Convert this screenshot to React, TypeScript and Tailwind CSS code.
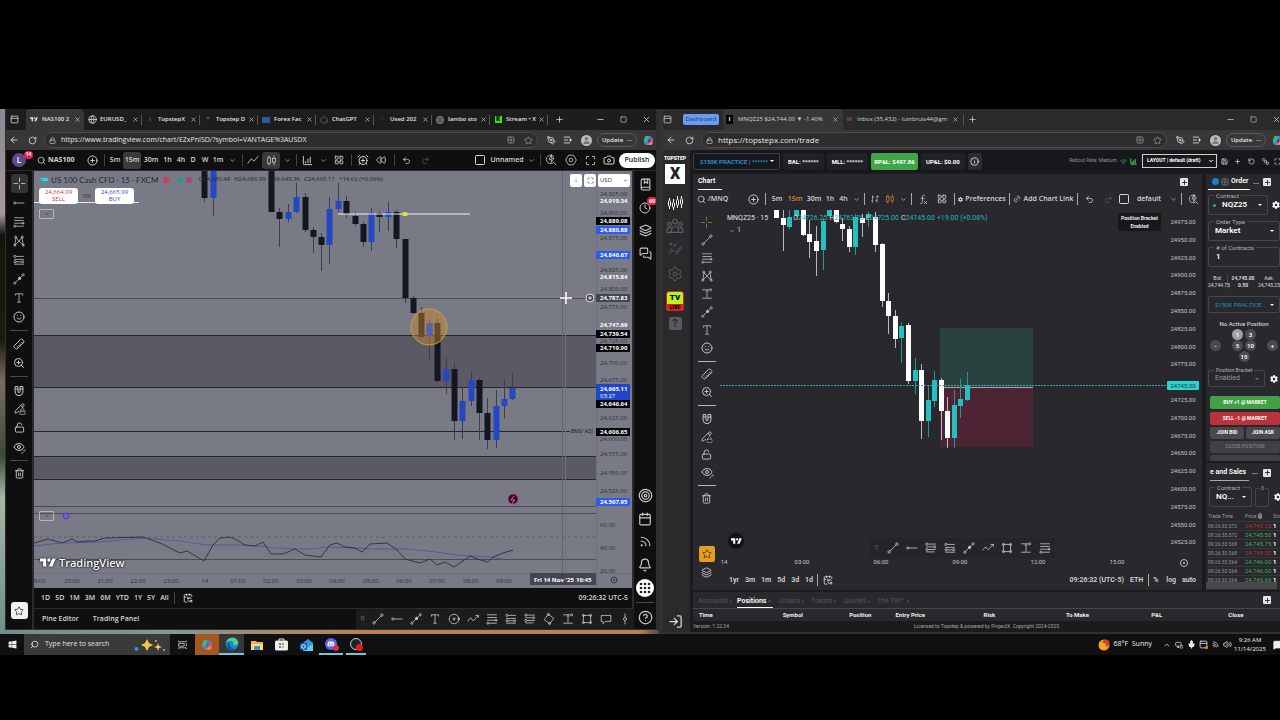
import type { ReactNode } from 'react'
import clsx from 'clsx'
import {
  AlarmClockPlus, ArrowLeft, Bell, BookMarked, Calendar, CalendarSync, Camera, ChartColumnIncreasing, ChevronDown,
  ChevronUp, CircleHelp, CirclePlus, Clock, Eye, Globe, Grid2x2, Hexagon, Info, Layers, LayoutGrid, Link2, ListPlus,
  Lock, LockOpen, LogIn, Magnet, Maximize, MessageSquare, MessagesSquare, Mic, Minus, MonitorSmartphone, PanelTop,
  Pencil, PenTool, Plus, Redo2, Rewind, RotateCcw, RotateCw, Rss, Ruler, Save, Search, Settings, Smile, Square,
  SquareStack, Star, Target, Trash2, Undo2, User, Volume2, Wifi, X, ZoomIn,
} from 'lucide-react'
import { FaCog, FaDiscord, FaWindows } from 'react-icons/fa'

type Candle = [x: number, high: number, open: number, close: number, low: number, up: 0 | 1]

const leftCandles: Candle[] = [
  [204, 171, 171, 198, 202, 0], [213, 171, 171, 198, 216, 1], [271, 171, 171, 212, 212, 0],
  [279, 208, 212, 219, 247, 0], [288, 204, 212, 219, 222, 1], [296, 183, 197, 212, 213, 1],
  [305, 193, 197, 230, 232, 0], [313, 227, 230, 237, 253, 0], [321, 233, 237, 245, 271, 0],
  [329, 197, 209, 245, 264, 1], [338, 183, 201, 209, 212, 1], [346, 196, 201, 214, 218, 0],
  [355, 212, 216, 224, 226, 0], [363, 222, 224, 242, 247, 0], [371, 208, 213, 242, 251, 1],
  [379, 211, 213, 217, 232, 0], [388, 202, 212, 217, 231, 1], [396, 210, 212, 239, 248, 0],
  [405, 239, 239, 298, 303, 0], [413, 296, 298, 313, 314, 0], [421, 307, 313, 337, 338, 0],
  [429, 320, 323, 336, 361, 1], [437, 319, 323, 381, 383, 0], [446, 357, 369, 381, 394, 1],
  [454, 363, 369, 421, 440, 0], [462, 387, 401, 421, 439, 1], [471, 371, 380, 401, 406, 1],
  [479, 378, 380, 413, 440, 0], [487, 398, 413, 440, 449, 0], [496, 390, 406, 440, 448, 1],
  [504, 380, 399, 406, 419, 1], [512, 373, 388, 399, 400, 1],
]

const rightCandles: Candle[] = [
  [776, 210, 210, 218, 218, 0], [783, 210, 218, 225, 251, 0], [789, 210, 217, 227, 229, 1],
  [796, 210, 210, 216, 218, 1], [803, 210, 210, 235, 236, 0], [809, 220, 234, 242, 258, 0],
  [816, 226, 241, 251, 276, 0], [823, 218, 221, 250, 270, 1], [829, 210, 210, 216, 217, 1],
  [836, 210, 210, 222, 223, 0], [842, 218, 224, 229, 241, 0], [849, 226, 229, 247, 252, 0],
  [855, 214, 217, 247, 255, 1], [862, 214, 218, 223, 237, 0], [868, 212, 214, 218, 227, 1],
  [875, 212, 217, 245, 252, 0], [882, 243, 244, 301, 307, 0], [888, 293, 301, 316, 334, 0],
  [895, 310, 316, 339, 348, 0], [901, 322, 326, 338, 363, 1], [908, 323, 325, 381, 384, 0],
  [915, 358, 370, 381, 394, 1], [921, 364, 370, 421, 439, 0], [928, 386, 400, 421, 437, 1],
  [934, 371, 380, 401, 407, 1], [941, 378, 380, 411, 440, 0], [947, 397, 411, 438, 448, 0],
  [954, 390, 405, 438, 448, 1], [960, 379, 399, 406, 418, 1], [967, 372, 385, 400, 401, 1],
]

const leftPrices: [string, number, string?][] = [
  ['24,925.00', 194], ['24,919.34', 201, 'white'], ['24,900.00', 213], ['24,875.00', 238],
  ['24,889.08', 221, '#050508'], ['24,880.88', 230, '#2f5be8'], ['24,846.67', 255, '#2f5be8'],
  ['24,825.00', 270], ['24,815.84', 277, 'white'], ['24,800.00', 289], ['24,775.00', 307],
  ['24,787.83', 298, '#434651'], ['24,747.69', 325, 'white'], ['24,725.00', 341],
  ['24,739.54', 334, '#050508'], ['24,719.90', 348, '#050508'], ['24,700.00', 363],
  ['24,675.00', 380], ['24,646.64', 404, '#050508'], ['24,625.00', 418], ['24,600.00', 439],
  ['24,606.65', 432, '#050508'], ['24,575.00', 454], ['24,550.00', 473], ['24,525.00', 491],
  ['24,507.95', 502, '#2f5be8'], ['60.00', 525], ['40.00', 548], ['20.00', 571],
]

const leftTimes: [string, number][] = [
  ['19:00', 38], ['20:00', 72], ['21:00', 105], ['22:00', 138], ['23:00', 171], ['14', 205], ['01:00', 238],
  ['02:00', 271], ['03:00', 304], ['04:00', 337], ['05:00', 371], ['06:00', 404], ['07:00', 437],
  ['08:00', 471], ['09:00', 504],
]

const rightPrices: [string, number][] = [
  ['24975.00', 222], ['24950.00', 240], ['24925.00', 258], ['24900.00', 275], ['24875.00', 293],
  ['24850.00', 311], ['24825.00', 329], ['24800.00', 347], ['24775.00', 364], ['24725.00', 400],
  ['24700.00', 418], ['24675.00', 436], ['24650.00', 453], ['24625.00', 471], ['24600.00', 489],
  ['24575.00', 507], ['24550.00', 525], ['24525.00', 542],
]

const rightTimes: [string, number][] = [
  ['14', 724], ['03:00', 802], ['06:00', 881], ['09:00', 960], ['12:00', 1038], ['15:00', 1117],
]

const trades: [string, string, boolean][] = [
  ['09:26:33.572', '24,745.25', false], ['09:26:33.572', '24,745.50', true],
  ['09:26:33.568', '24,745.75', true], ['09:26:33.568', '24,745.50', false],
  ['09:26:33.564', '24,746.00', true], ['09:26:33.564', '24,746.00', true],
  ['09:26:33.564', '24,745.60', true],
]

// Drawing-tool glyphs on a 20x20 grid
const glyphs: Record<string, ReactNode> = {
  cross: <path d="M10 1v7M10 12v7M1 10h7M12 10h7" />,
  trend: <><circle cx="3.5" cy="16.5" r="2" /><circle cx="16.5" cy="3.5" r="2" /><path d="M5 15L15 5" /></>,
  ray: <><circle cx="3" cy="10" r="1.8" /><path d="M5 10h14" /></>,
  arrow: <><circle cx="3" cy="17" r="1.8" /><circle cx="17" cy="3" r="1.8" /><path d="M4.5 15.5l11-11" /><circle cx="11" cy="9" r="2" fill="currentColor" /></>,
  fib: <><path d="M2 3h16M2 7.5h16M2 12h16M5 17h13" /><circle cx="3" cy="17" r="1.7" /><circle cx="17" cy="12" r="1.4" /></>,
  pattern: <><path d="M3 17L5 4l5 6 5-6 2 13-7-7z" /><circle cx="3" cy="17" r="1.7" /><circle cx="17" cy="17" r="1.7" /><circle cx="15.5" cy="3.5" r="1.7" /><circle cx="4.5" cy="3.5" r="1.7" /></>,
  position: <><circle cx="3" cy="4" r="1.8" /><path d="M5 4h13M2 9h16M2 17h16M5 13h9" /><circle cx="3.5" cy="13" r="1.8" /><circle cx="16" cy="13" r="1.8" /></>,
  channel: <><circle cx="3" cy="3.5" r="1.8" /><path d="M5 3.5h13M2 8h12M2 16.5h14" /><circle cx="16" cy="8" r="1.8" /><circle cx="3" cy="12.5" r="1.8" /><path d="M5 12.5h13" /></>,
  text: <path d="M4 6V3h12v3M10 3v14M7 17h6" />,
  measure: <><path d="M2 3h12M2 17h16M10 4v12M8 6l2-2 2 2" /><circle cx="16" cy="3" r="1.7" /></>,
  circle: <><circle cx="10" cy="10" r="8" /><circle cx="10" cy="10" r="1.8" /><circle cx="18" cy="10" r="1.6" /></>,
  wave: <path d="M1 14l5-6 4 5 4-4 5-5M14 4h5v4" />,
  rotate: <><path d="M9 2l9 7-7 9-9-7z" /><circle cx="9" cy="2.5" r="1.7" /><circle cx="11" cy="17.5" r="1.7" /></>,
  rect: <><path d="M4 4h12v12H4z" /><circle cx="4" cy="4" r="1.7" /><circle cx="16" cy="4" r="1.7" /><circle cx="4" cy="16" r="1.7" /><circle cx="16" cy="16" r="1.7" /></>,
  note: <path d="M2 4h16v10h-9l-4 4v-4H2z" />,
  vline: <><path d="M10 1v6M10 13v6" /><circle cx="10" cy="10" r="2.5" /></>,
  lineChart: <path d="M1 16l6-8 5 4 7-9" />,
  bars: <path d="M5 3v14M2 14h3M5 6h3M14 3v14M11 13h3M14 5h4" />,
  candles: <><path d="M5.5 1v4M5.5 15v4M14.5 1v5M14.5 13v6" /><rect x="3" y="5" width="5" height="10" /><rect x="12" y="6" width="5" height="7" /></>,
  fx: <path d="M12 2c-4-1-4 3-4 7v5c0 3-2 4-4 3M5 8h7M11 13l5 5M16 13l-5 5" />,
  quickSearch: <><path d="M15 5a7 7 0 1 0 0 8M14.500 14l4 4.500" /><path d="M11 1L7 9h4l-1 5 5-7h-4z" /></>,
  settings: <><path d="M6 2h8l5 8-5 8H6l-5-8z" /><circle cx="10" cy="10" r="3" /></>,
  community: <><circle cx="10" cy="5" r="2.5" /><circle cx="4" cy="8" r="2" /><circle cx="16" cy="8" r="2" /><path d="M6 17c0-9 8-9 8 0zM1 17c0-4 1-6 5-5M19 17c0-4-1-6-5-5M1 17h18" /></>,
  signals: <><path d="M1 18l6-6 3 3 9-9M1 14l5-5M10 18l8-8" /><path d="M4 2v4M2 4h4M9 4v3M7.500 5.500h3M12 2v2" /></>,
  taskView: <path d="M3 3v2h14V3M3 8h10v5H3zM17 8v5M3 18v-2h14v2" />,
}

function Glyph({ name, size = 12, className }: { name: string; size?: number; className?: string }) {
  return (
    <svg width={size} height={size} viewBox="0 0 20 20" fill="none" stroke="currentColor" strokeWidth="1.3" className={clsx('shrink-0', className)}>
      {glyphs[name]}
    </svg>
  )
}

function IconButton({ label, className, children }: { label: string; className?: string; children: ReactNode }) {
  return (
    <button type="button" aria-label={label} className={clsx('flex shrink-0 items-center justify-center', className)}>
      {children}
    </button>
  )
}

function Divider({ className }: { className?: string }) {
  return (
    <span className={clsx('flex shrink-0 justify-center', className)}>
      <span className="h-3 w-px bg-current" />
    </span>
  )
}

interface CandlesProps {
  data: Candle[]
  width: number
  upColor: string
  downColor: string
  upWick: string
  downWick: string
}

function Candles({ data, width, upColor, downColor, upWick, downWick }: CandlesProps) {
  return (
    <g>
      {data.map(([x, high, open, close, low, up]) => (
        <g key={x}>
          <line x1={x + 0.5} x2={x + 0.5} y1={high} y2={low} stroke={up ? upWick : downWick} />
          <rect x={x - width / 2 + 0.5} y={open} width={width} height={close - open} fill={up ? upColor : downColor} />
        </g>
      ))}
    </g>
  )
}

function TvMark({ className }: { className?: string }) {
  return (
    <svg viewBox="0 0 36 20" className={className} fill="currentColor">
      <path d="M14 19H7V8H0V1h14zM28 19h-8L27.5 1h8z" />
      <circle cx="20" cy="4.5" r="3.8" />
    </svg>
  )
}

function CopilotMark({ className }: { className?: string }) {
  return (
    <svg viewBox="0 0 20 20" className={className}>
      <path d="M7 2h6c2 0 2 2 3 5l-5 1-4 10H6c-3 0-5-3-4-6l2-7c0-2 1-3 3-3z" fill="#2f8de0" />
      <path d="M6 2h4L7 12 2 13c-1-2 0-4 1-7 0-2 1-4 3-4z" fill="#45b86b" />
      <path d="M14 18H8c-1 0-2-1-2-3l6-2 3-8c3 0 4 3 3 6l-1 4c0 2-1 3-3 3z" fill="#c750b4" />
      <path d="M13 18H9l3-5 6 0c-1 3-2 5-5 5z" fill="#f08a3c" />
    </svg>
  )
}

function AddressBar({ url, textSize }: { url: string; textSize: string }) {
  return (
    <div className="flex h-5 items-center bg-[#373737] text-[#e6e6e6]">
      <IconButton label="Back" className="w-4"><ArrowLeft size={10} /></IconButton>
      <IconButton label="Reload" className="w-5"><RotateCw size={9} /></IconButton>
      <label className="ml-[2px] flex h-4 min-w-0 flex-1 items-center gap-[5px] rounded-full border border-[#4b4b4b] bg-[#2d2d2d] px-1">
        <Lock size={7} className="shrink-0" />
        <input aria-label="Address" defaultValue={url} className={clsx('min-w-0 flex-1 bg-transparent outline-none', textSize)} />
        <Grid2x2 size={8} className="shrink-0 text-[#9a9a9a]" />
        <Star size={9} className="ml-1 shrink-0 text-[#9a9a9a]" />
      </label>
      <IconButton label="Extensions" className="ml-[5px] w-4"><PenTool size={9} /></IconButton>
      <IconButton label="Favorites" className="w-[18px]"><ListPlus size={10} /></IconButton>
      <span className="ml-1 flex size-[11px] shrink-0 items-center justify-center rounded-full bg-[#bdbdbd] text-[#777]">
        <User size={9} fill="currentColor" />
      </span>
      <button type="button" className="ml-[5px] flex h-[14px] w-10 shrink-0 items-center justify-center gap-1 rounded-full border border-[#5a5a5a] text-[6px] font-semibold">
        Update <span>···</span>
      </button>
      <IconButton label="Copilot" className="ml-[3px] w-4"><CopilotMark className="size-[11px]" /></IconButton>
    </div>
  )
}

function WindowButtons({ className }: { className?: string }) {
  return (
    <div className={clsx('ml-auto flex shrink-0 items-center', className)}>
      <IconButton label="Minimize" className="w-[23px]"><Minus size={9} /></IconButton>
      <IconButton label="Maximize" className="w-[23px]"><Square size={7} /></IconButton>
      <IconButton label="Close window" className="w-[23px]"><X size={9} /></IconButton>
    </div>
  )
}

const browserTabs: { title: string; icon: ReactNode }[] = [
  { title: 'NAS100 2', icon: <TvMark className="w-2" /> },
  { title: 'EURUSD_', icon: <Globe size={9} /> },
  { title: 'TopstepX', icon: <span className="text-[#888]">I</span> },
  { title: 'Topstep D', icon: <span className="text-[#888]">T</span> },
  { title: 'Forex Fac', icon: <span className="h-[6px] w-2 bg-[#275a9e]" /> },
  { title: 'ChatGPT', icon: <Hexagon size={8} className="text-[#777]" /> },
  { title: 'Used 202', icon: <span className="text-[#5a2a2a]">ıı</span> },
  { title: 'lambo sto', icon: <span className="size-2 rounded-full border border-[#888] bg-[#555]" /> },
  { title: 'Stream • X', icon: <span className="flex size-[7px] items-center justify-center bg-[#3fe01c] text-[6px] font-black text-black">K</span> },
]

const leftTools: ReactNode[] = [
  <Glyph name="cross" size={13} />, <Glyph name="ray" />, <Glyph name="fib" />, <Glyph name="pattern" />,
  <Glyph name="position" />, <Glyph name="arrow" />, <Glyph name="text" />, <Smile size={12} />, null,
  <Ruler size={12} className="rotate-90" />, <ZoomIn size={12} />, null, <Magnet size={12} className="rotate-135" />,
  <PencilLock />, <LockOpen size={11} />, <EyeBrush />, null, <Trash2 size={11} />,
]

const rightTools: ReactNode[] = [
  <Glyph name="cross" size={13} className="text-[#a5733f]" />, <Glyph name="trend" />, <Glyph name="fib" />,
  <Glyph name="pattern" />, <Glyph name="measure" />, <Glyph name="arrow" />, <Glyph name="text" />,
  <Smile size={12} />, null, <Ruler size={12} className="rotate-90" />, <ZoomIn size={12} />, null,
  <Magnet size={12} className="rotate-135" />, <PencilLock />, <LockOpen size={11} />, <EyeBrush />, null,
  <Trash2 size={11} />,
]

function PencilLock() {
  return (
    <span className="relative">
      <Pencil size={11} />
      <Lock size={7} className="absolute -right-px -bottom-px bg-[#1a1a1c]" />
    </span>
  )
}

function EyeBrush() {
  return (
    <span className="relative">
      <Eye size={12} />
      <Pencil size={5} className="absolute -right-px -bottom-px" />
    </span>
  )
}

function ToolColumn({ tools, cell, line }: { tools: ReactNode[]; cell: string; line: string }) {
  return (
    <>
      {tools.map((tool, i) =>
        tool === null ? (
          <span key={i} className="flex h-2 items-center"><span className={line} /></span>
        ) : (
          <IconButton key={i} label={`Tool ${i + 1}`} className={clsx(cell, i === 0 && 'rounded-[3px]')}>{tool}</IconButton>
        ),
      )}
    </>
  )
}

function TradingViewToolbar() {
  const frame = 'text-[7px] font-semibold'
  return (
    <div className="flex h-5 items-center bg-[#0f0f0f] text-[#d6d6d6]">
      <div className="relative ml-[6px] flex size-[14px] shrink-0 items-center justify-center rounded-full bg-[#5d4a86] text-[8px] font-semibold text-white">
        L
        <span className="absolute -top-[2px] -right-[7px] flex h-2 w-[9px] items-center justify-center rounded-full bg-[#e0234e] text-[5px] font-bold">14</span>
      </div>
      <button type="button" className="ml-[11px] flex w-[47px] shrink-0 items-center gap-[2px] text-[7px] font-bold">
        <Search size={9} /> NAS100
      </button>
      <IconButton label="Compare" className="w-4"><CirclePlus size={11} /></IconButton>
      <Divider className="w-2 text-[#444]" />
      <button type="button" className={clsx(frame, 'w-[14px]')}>5m</button>
      <button type="button" className={clsx(frame, 'mx-px h-[17px] w-[18px] rounded-[3px] bg-[#3a3a3a]')}>15m</button>
      <button type="button" className={clsx(frame, 'w-[18px]')}>30m</button>
      <button type="button" className={clsx(frame, 'w-[15px]')}>1h</button>
      <button type="button" className={clsx(frame, 'w-3')}>4h</button>
      <button type="button" className={clsx(frame, 'w-3')}>D</button>
      <button type="button" className={clsx(frame, 'w-3')}>W</button>
      <button type="button" className={clsx(frame, 'w-[14px]')}>1m</button>
      <IconButton label="More intervals" className="w-[14px]"><ChevronDown size={7} /></IconButton>
      <Divider className="w-[6px] text-[#444]" />
      <IconButton label="Line" className="w-[15px]"><Glyph name="lineChart" /></IconButton>
      <IconButton label="Candles" className="mx-[2px] h-[17px] w-[18px] rounded-[3px] bg-[#3a3a3a]"><Glyph name="candles" size={11} /></IconButton>
      <IconButton label="Chart types" className="w-[10px]"><ChevronDown size={7} /></IconButton>
      <Divider className="w-2 text-[#444]" />
      <IconButton label="Indicators" className="w-[14px]"><ChartColumnIncreasing size={11} /></IconButton>
      <IconButton label="Indicator list" className="w-[18px]"><ChevronDown size={7} /></IconButton>
      <IconButton label="Templates" className="w-[14px]"><LayoutGrid size={10} /></IconButton>
      <Divider className="w-[10px] text-[#444]" />
      <IconButton label="Alert" className="w-[14px]"><AlarmClockPlus size={12} /></IconButton>
      <IconButton label="Replay" className="w-[22px]"><Rewind size={10} /></IconButton>
      <Divider className="w-1 text-[#444]" />
      <IconButton label="Undo" className="w-5"><Undo2 size={9} /></IconButton>
      <IconButton label="Redo" className="w-[18px] text-[#555]"><Redo2 size={9} /></IconButton>
      <div className="ml-auto flex items-center">
        <IconButton label="Layout" className="w-5"><Square size={12} /></IconButton>
        <button type="button" className="w-[34px] text-[7px] font-semibold">Unnamed</button>
        <IconButton label="Layouts" className="w-[14px]"><ChevronDown size={7} /></IconButton>
        <Divider className="w-1 text-[#444]" />
        <IconButton label="Quick search" className="w-[18px]"><Glyph name="quickSearch" /></IconButton>
        <IconButton label="Settings" className="w-[21px]"><Glyph name="settings" /></IconButton>
        <IconButton label="Fullscreen" className="w-[18px]"><Maximize size={11} /></IconButton>
        <IconButton label="Snapshot" className="w-5"><Camera size={12} /></IconButton>
        <button type="button" className="mr-px h-[15px] w-9 rounded-full bg-white text-[7px] font-semibold text-[#222]">Publish</button>
      </div>
    </div>
  )
}

function LeftChart() {
  return (
    <div className="relative min-h-0 flex-1 bg-[#787b86]">
      <svg className="absolute inset-0 h-full w-full text-[7px]" aria-label="NAS100 chart">
        <g transform="translate(-34 -171)">
          <rect x="34" y="335" width="562" height="52" fill="#5a5965" />
          <rect x="34" y="456" width="562" height="23" fill="#5a5965" />
          {[335, 387, 456, 479].map((y) => (
            <line key={y} x1="34" x2="596" y1={y + 0.5} y2={y + 0.5} stroke="#23252f" />
          ))}
          <line x1="34" x2="570" y1="431.5" y2="431.5" stroke="#23252f" />
          {[298, 506, 513, 559].map((y) => (
            <line key={y} x1="34" x2="596" y1={y + 0.5} y2={y + 0.5} stroke="#4a4d58" />
          ))}
          <line x1="34" x2="632" y1="573.5" y2="573.5" stroke="#6c6f7a" />
          <line x1="34" x2="596" y1="537" y2="537" stroke="#5c5f69" strokeDasharray="3 3" />
          <line x1="562.5" x2="562.5" y1="171" y2="574" stroke="#60636e" />
          <line x1="565.5" x2="565.5" y1="171" y2="574" stroke="#6f727d" />
          <line x1="596.5" x2="596.5" y1="171" y2="588" stroke="#6c6f7a" />
          <line x1="34" x2="139" y1="202.5" y2="202.5" stroke="#e8e8ea" />
          <Candles data={leftCandles} width={6} upColor="#2447c4" downColor="#141722" upWick="#3a3f50" downWick="#3a3f50" />
          <circle cx="429" cy="327" r="18" fill="#d08a2c" fillOpacity="0.45" stroke="#d89a3c" />
          <rect x="426.5" y="323" width="6" height="13" fill="#5a5fb0" />
          <line x1="338" x2="470" y1="214" y2="214" stroke="#f2f2f2" />
          <ellipse cx="405" cy="214" rx="3" ry="2" fill="#e5e234" />
          <path d="M560 298h12M566 292v12" stroke="#fff" strokeWidth="1.5" />
          <polyline fill="none" stroke="#4552a8" strokeWidth="0.8" points="34,546 60,543 100,542 143,538 180,541 207,545 245,545 277,548 307,549 330,547 377,549 407,549 437,552 457,555 490,557 503,559" />
          <polyline fill="none" stroke="#2b2e38" strokeWidth="0.9" points="34,543 48,539 62,543 72,539 78,542 88,541 95,541 105,538 143,537 160,543 180,553 187,551 204,561 213,545 220,538 230,537 235,539 245,545 255,546 263,542 271,554 283,554 295,549 305,555 321,557 330,545 337,543 345,547 355,548 362,552 370,544 387,543 397,550 405,559 420,563 430,559 437,565 445,562 454,567 470,556 477,559 488,562 493,557 503,553 513,550" />
          <circle cx="513" cy="499" r="5" fill="#2b0f28" stroke="#b8357c" />
          <path d="M514 496l-3 4h4l-3 3" stroke="#e06aa8" fill="none" />
          <circle cx="66" cy="516" r="3" fill="#7c5cc8" stroke="#5a35d0" />
          <text x="571" y="433" fontSize="5" fill="#15171f">BMS/ ADJ</text>
          {leftPrices.map(([price, y, tone]) => (
            <g key={price}>
              {tone && tone !== 'white' && <rect x="596" y={y - 4} width="34" height="8" fill={tone} />}
              <text x="600" y={y + 2} fill={tone ? '#fff' : '#2c2f3a'} fontWeight={tone ? 700 : 400} fontSize="6">{price}</text>
            </g>
          ))}
          <rect x="596" y="384" width="34" height="16" fill="#1f45c8" />
          <text x="600" y="391" fill="#fff" fontSize="6" fontWeight="700">24,665.11</text>
          <text x="600" y="398" fill="#fff" fontSize="6">03:27</text>
          <circle cx="590" cy="298" r="4" fill="#434651" stroke="#fff" strokeWidth="0.8" />
          <path d="M588 298h4M590 296v4" stroke="#fff" strokeWidth="0.8" />
          {leftTimes.map(([time, x]) => (
            <text key={x} x={x} y="583" textAnchor="middle" fontSize="6" fill="#2c2f3a">{time}</text>
          ))}
          <rect x="530" y="573" width="66" height="12" fill="#434651" />
          <text x="534" y="582" fill="#fff" fontSize="6" fontWeight="700">Fri 14 Nov '25</text>
          <text x="576" y="582" fill="#fff" fontSize="6" fontWeight="700">10:45</text>
          <circle cx="614" cy="580" r="3" fill="none" stroke="#33363f" />
          <circle cx="614" cy="580" r="1" fill="#33363f" />
        </g>
      </svg>
      <div className="relative flex h-[17px] items-center pl-[6px] text-[#23252e]">
        <span className="flex h-[6px] w-2 items-center justify-center rounded-full bg-[#1ba5b4] text-[4px] text-white">100</span>
        <span className="ml-[3px] text-[8px] [font-family:Lato,sans-serif]">US 100 Cash CFD · 15 · FXCM</span>
        <span className="ml-[5px] size-[6px] rounded-full bg-[#d83a52]" />
        <span className="ml-2 size-[6px] rounded-full bg-[#2b9a84]" />
        <span className="ml-[3px] size-[6px] rounded-full bg-[#a8467c]" />
        <span className="ml-[6px] flex gap-1 text-[6px]">
          <span>O24,650.49</span><span>H24,686.99</span><span>L24,649.36</span><span>C24,665.11</span><span>+14.62 (+0.06%)</span>
        </span>
      </div>
      <div className="relative flex items-center pl-[5px] text-[6px] leading-[7px]">
        <button type="button" className="h-4 w-[39px] rounded-[3px] bg-white text-[#d0304a]">24,664.99<br />SELL</button>
        <span className="w-[17px] text-center text-[5px] text-[#23252e]">100</span>
        <button type="button" className="h-4 w-[39px] rounded-[3px] bg-white text-[#2a48cc]">24,665.99<br />BUY</button>
      </div>
      <IconButton label="Collapse legend" className="relative mt-[5px] ml-[5px] h-[10px] w-[15px] rounded-[1px] border border-[#b4b6bd] text-[#22242c]"><ChevronDown size={6} /></IconButton>
      <div className="absolute top-[3px] right-[2px] flex gap-[2px] text-[#333]">
        <IconButton label="Scroll to latest" className="h-[13px] w-3 rounded-[2px] bg-white text-[7px]">↓</IconButton>
        <IconButton label="Reset scale" className="h-[13px] w-3 rounded-[2px] bg-white"><Maximize size={7} /></IconButton>
        <div className="flex h-[13px] w-8 items-center rounded-[2px] bg-white">
          <select aria-label="Currency" className="min-w-0 flex-1 appearance-none bg-transparent pl-[2px] text-[6px] outline-none"><option>USD</option></select>
          <ChevronDown size={5} strokeWidth={3} className="mr-[2px]" />
        </div>
      </div>
      <IconButton label="Collapse indicator" className="absolute top-[340px] left-[5px] h-[10px] w-[15px] rounded-[1px] border border-[#b4b6bd] text-[#22242c]"><ChevronDown size={6} /></IconButton>
      <div className="absolute bottom-[19px] left-[6px] flex items-center gap-[3px] text-[11px] leading-[13px] font-semibold text-white [text-shadow:0_0_2px_#000,0_0_2px_#000]">
        <TvMark className="w-4 [filter:drop-shadow(0_0_1px_#000)]" />TradingView
      </div>
    </div>
  )
}

function LeftWindow() {
  const ranges = ['1D', '5D', '1M', '3M', '6M', 'YTD', '1Y', '5Y', 'All']
  const favourites = ['trend', 'ray', 'arrow', 'text', 'circle', 'wave', 'fib', 'position', 'channel', 'rotate', 'measure', 'rect', 'note', 'vline']
  return (
    <section className="mb-1 flex min-w-0 flex-col overflow-hidden border-r-[3px] border-b border-l border-[#2f2f2f] bg-[#2c2c2c]">
      <div className="flex h-[21px] items-stretch bg-[#1d1d1d] text-[#e2e2e2]">
        <IconButton label="Workspaces" className="w-5 pr-1"><PanelTop size={9} /></IconButton>
        {browserTabs.map((tab, i) => (
          <div key={tab.title} className={clsx('flex w-[58px] items-center text-[6px]', i === 0 && 'rounded-t-[4px] bg-[#373737]')}>
            <span className="ml-1 flex w-2 shrink-0 justify-center">{tab.icon}</span>
            <button type="button" className="ml-1 w-[30px] text-left font-semibold whitespace-nowrap">{tab.title}</button>
            <IconButton label="Close tab" className="ml-px w-2"><X size={7} /></IconButton>
            {i > 0 && <span className="ml-auto h-[10px] w-px bg-[#555]" />}
          </div>
        ))}
        <IconButton label="New tab" className="ml-[5px] w-3"><Plus size={9} /></IconButton>
        <WindowButtons className="-mr-[2px]" />
      </div>
      <AddressBar url="https://www.tradingview.com/chart/EZxPnISD/?symbol=VANTAGE%3AUSDX" textSize="text-[7px]" />
      <TradingViewToolbar />
      <div className="flex min-h-0 flex-1 pt-px">
        <aside className="mr-[2px] flex w-[26px] shrink-0 flex-col items-center bg-[#0f0f0f] pt-[3px] text-[#c9c9c9]">
          <ToolColumn tools={leftTools} cell="h-[19px] w-[17px] first:bg-[#333]" line="h-px w-[18px] bg-[#4a4a4a]" />
          <IconButton label="Favorites toolbar" className="mt-auto mb-[10px] size-[17px] rounded-[3px] bg-[#f2f2f2] text-[#333]"><Star size={10} /></IconButton>
        </aside>
        <div className="flex min-w-0 flex-1 flex-col">
          <LeftChart />
          <div className="flex h-5 items-center bg-[#0f0f0f] pl-[7px] text-[7px] font-semibold text-[#d6d6d6]">
            <div className="flex gap-[5px]">
              {ranges.map((range) => <button type="button" key={range}>{range}</button>)}
            </div>
            <Divider className="w-3 text-[#444]" />
            <IconButton label="Go to date" className="w-[14px]"><CalendarSync size={10} /></IconButton>
            <span className="mr-1 ml-auto">09:26:32 UTC-5</span>
          </div>
          <div className="mt-px flex h-5 items-center bg-[#0f0f0f] pl-2 text-[7px] font-semibold text-[#d6d6d6]">
            <button type="button">Pine Editor</button>
            <button type="button" className="ml-[14px]">Trading Panel</button>
            <div className="-mr-[2px] ml-auto flex h-full items-center bg-[#1c1c1c] pl-1 text-[#d0d0d0]">
              <span className="w-2 text-[#555]">⠿</span>
              {favourites.map((name) => (
                <IconButton key={name} label={name} className="w-[19px]"><Glyph name={name} /></IconButton>
              ))}
            </div>
          </div>
        </div>
        <aside className="ml-[2px] flex w-[22px] shrink-0 flex-col items-center bg-[#0f0f0f] pt-[2px] text-[#c9c9c9]">
          <IconButton label="Watchlist" className="h-[23px]"><BookMarked size={13} /></IconButton>
          <IconButton label="Alerts" className="relative h-[23px]">
            <Clock size={12} />
            <span className="absolute top-px -right-[6px] rounded-full bg-[#e0234e] px-[2px] text-[5px] leading-[8px] font-bold text-white">69</span>
          </IconButton>
          <IconButton label="Object tree" className="h-[23px]"><Layers size={13} /></IconButton>
          <IconButton label="Chats" className="h-[23px]"><MessagesSquare size={13} /></IconButton>
          <IconButton label="Screener" className="mt-auto h-[23px]"><Target size={15} /></IconButton>
          <IconButton label="Calendar" className="h-[23px]"><Calendar size={14} /></IconButton>
          <IconButton label="News" className="h-[23px]"><Rss size={13} /></IconButton>
          <IconButton label="Notifications" className="h-[23px]"><Bell size={14} /></IconButton>
          <IconButton label="Products" className="h-[23px]">
            <svg width="18" height="18" viewBox="0 0 18 18">
              <circle cx="9" cy="9" r="9" fill="#fff" />
              {[5, 9, 13].map((y) => [5, 9, 13].map((x) => <circle key={`${x}-${y}`} cx={x} cy={y} r="1.3" fill="#222" />))}
            </svg>
          </IconButton>
          <span className="my-[3px] h-px w-[18px] bg-[#4a4a4a]" />
          <IconButton label="Help" className="h-[23px]"><CircleHelp size={15} /></IconButton>
        </aside>
      </div>
    </section>
  )
}

function Caret({ className }: { className?: string }) {
  return <span className={clsx('shrink-0 border-x-2 border-t-2 border-x-transparent', className ?? 'mr-[5px] border-t-white')} />
}

interface FieldProps {
  label: string
  value: string
  className?: string
  small?: boolean
  children?: ReactNode
}

function Field({ label, value, className, small, children }: FieldProps) {
  const id = label.replace(/\W/g, '').toLowerCase()
  return (
    <div className={clsx('relative flex items-center rounded-[2px] border border-[#47464c]', className)}>
      <label htmlFor={id} className={clsx('absolute -top-[4px] left-[5px] bg-[#29282d] px-[2px] leading-[7px] whitespace-nowrap text-[#b5b5b8]', small ? 'text-[5px]' : 'text-[6px]')}>{label}</label>
      {children}
      <select id={id} className={clsx('min-w-0 flex-1 appearance-none bg-transparent pl-[6px] outline-none', small ? 'text-[7px] text-[#97979b]' : 'text-[8px] font-semibold text-white')}>
        <option>{value}</option>
      </select>
      <Caret className={small ? 'mr-[5px] border-t-[#77767b]' : 'mr-[5px] border-t-white'} />
    </div>
  )
}

function PanelActions() {
  return (
    <IconButton label="Add panel" className="ml-auto size-2 rounded-[1px] bg-[#e4e4e4] text-[#222]"><Plus size={7} strokeWidth={3} /></IconButton>
  )
}

function OrderPanel() {
  const round = 'size-[11px] rounded-full bg-[#4c4b50] text-[6px] leading-[11px] font-semibold text-white'
  return (
    <div className="flex min-h-0 flex-1 flex-col overflow-hidden bg-[#29282d] pl-[2px]">
      <div className="flex h-4 shrink-0 items-center pr-[9px] text-[7px] font-semibold text-white">
        <div className="flex h-full w-[42px] shrink-0 items-center gap-[2px] border-b border-white pl-1">
          <span className="size-[7px] shrink-0 rounded-full bg-[#1d7fd0]" />
          <Grid2x2 size={8} className="text-[#888]" />Order
        </div>
        <span className="ml-[3px]">...</span>
        <PanelActions />
      </div>
      <div className="mt-[5px] flex items-center gap-1">
        <Field label="Contract" value="NQZ25" className="h-5 w-[60px] shrink-0"><span className="ml-1 size-[3px] shrink-0 rounded-full bg-[#3fae55]" /></Field>
        <FaCog size={8} className="shrink-0 text-white" />
      </div>
      <Field label="Order Type" value="Market" className="mt-[6px] h-5 shrink-0" />
      <div className="relative mt-[6px] flex h-5 shrink-0 rounded-[2px] border border-[#47464c]">
        <label htmlFor="contracts" className="absolute -top-[4px] left-[5px] bg-[#29282d] px-[2px] text-[6px] leading-[7px] text-[#b5b5b8]"># of Contracts</label>
        <input id="contracts" defaultValue="1" className="w-full bg-transparent pl-[7px] text-[8px] font-semibold text-white outline-none" />
      </div>
      <div className="mt-1 grid h-[21px] shrink-0 grid-cols-[20px_1fr_22px] items-center text-center text-[5px] leading-[7px] whitespace-nowrap text-[#dedede]">
        <div className="border-r border-[#47464c] pt-px">Bid:<br />24,744.75</div>
        <div className="font-bold">24,745.00<br />0.50</div>
        <div>Ask:<br />24,745.25</div>
      </div>
      <div className="mt-1 flex h-[17px] shrink-0 items-center rounded-[2px] border border-[#47464c]">
        <select aria-label="Account" className="min-w-0 flex-1 appearance-none bg-transparent pl-[6px] text-[6px] text-[#2a8cc9] outline-none"><option>$150K PRACTICE...</option></select>
        <Caret />
      </div>
      <p className="mt-[6px] text-center text-[6px] leading-[10px] text-[#e4e4e4]">No Active Position</p>
      <div className="flex items-center justify-between px-[2px]">
        <button type="button" className={round}>-</button>
        <div className="flex w-[26px] flex-wrap justify-center gap-x-[2px] text-center">
          <button type="button" className="size-[11px] rounded-full bg-[#a2a1a5] text-[6px] leading-[11px] font-semibold text-white">1</button>
          <button type="button" className={round}>3</button>
          <button type="button" className={round}>5</button>
          <button type="button" className={round}>10</button>
          <button type="button" className={round}>15</button>
        </div>
        <button type="button" className={round}>+</button>
      </div>
      <div className="mt-[8px] flex items-center gap-1">
        <Field label="Position Bracket" value="Enabled" small className="h-[17px] w-[57px] shrink-0" />
        <FaCog size={8} className="ml-px shrink-0 text-white" />
      </div>
      <div className="mt-[9px] flex flex-col pl-[2px] text-[5px] font-bold text-white">
        <button type="button" className="h-[13px] rounded-[2px] bg-[#43a047]">BUY +1 @ MARKET</button>
        <button type="button" className="mt-[3px] h-[13px] rounded-[2px] bg-[#b9333c]">SELL -1 @ MARKET</button>
        <div className="mt-[2px] grid grid-cols-2 gap-[2px]">
          <button type="button" className="h-3 rounded-[2px] bg-[#4a494e]">JOIN BID</button>
          <button type="button" className="h-3 rounded-[2px] bg-[#4a494e]">JOIN ASK</button>
        </div>
        <button type="button" className="mt-[2px] h-3 rounded-[2px] bg-[#414045] text-[#77767b]">CLOSE POSITION</button>
        <div className="mt-[2px] h-[6px] rounded-t-[2px] bg-[#414045]" />
      </div>
    </div>
  )
}

function SalesPanel() {
  return (
    <div className="flex h-[127px] shrink-0 flex-col overflow-hidden bg-[#29282d]">
      <div className="flex h-[18px] shrink-0 items-center pt-px pr-[9px] pl-[4px] text-[7px] font-semibold text-white">
        <span className="flex h-full w-[39px] shrink-0 items-center border-b border-[#aaa] pt-px whitespace-nowrap">e and Sales</span>
        <span className="ml-[3px]">...</span>
        <PanelActions />
      </div>
      <div className="mt-[6px] flex items-center gap-[3px] pl-[3px]">
        <div className="relative flex h-5 w-[43px] shrink-0 items-center rounded-[2px] border border-[#47464c] text-white">
          <label htmlFor="tape" className="absolute -top-[4px] left-[5px] bg-[#29282d] px-[2px] text-[6px] leading-[7px] text-[#b5b5b8]">Contract</label>
          <select id="tape" className="min-w-0 flex-1 appearance-none bg-transparent pl-[6px] text-[8px] font-semibold outline-none"><option>NQ...</option></select>
          <Caret />
        </div>
        <span className="relative h-[19px] w-[14px] shrink-0 rounded-[2px] border border-[#47464c] text-[5px] leading-[7px] text-[#aaa]">
          <span className="absolute -top-[4px] left-[4px] bg-[#29282d] px-px">3</span>
        </span>
        <FaCog size={8} className="ml-[2px] shrink-0 text-white" />
      </div>
      <div className="mt-[5px] h-[70px] overflow-hidden">
        <table className="ml-[2px] w-[76px] table-fixed border-collapse text-left text-[6px] leading-[8px] whitespace-nowrap">
          <thead className="text-[5px] leading-[9px] text-[#9a9a9e]">
            <tr><th className="w-[37px] font-normal">Trade Time</th><th className="w-7 font-normal">Price <span className="rounded-full bg-[#8d8d92] px-px text-[#29282d]">?</span></th><th className="font-normal">Size</th></tr>
          </thead>
          <tbody>
            {trades.map(([time, price, up], i) => (
              <tr key={i} className="border-t border-[#38373c]">
                <td className="text-[5px] text-[#97979b]">{time}</td>
                <td className={up ? 'text-[#3fae55]' : 'text-[#b03042]'}>{price}</td>
                <td className="font-bold text-white">1</td>
              </tr>
            ))}
          </tbody>
        </table>
      </div>
      <div className="mr-[3px] h-[7px] shrink-0 bg-[#48474c]" />
    </div>
  )
}

function RightChart() {
  return (
    <div className="relative min-h-0 flex-1 overflow-hidden">
      <svg className="absolute inset-0 h-full w-full" aria-label="MNQZ25 chart">
        <g transform="translate(-720 -208)">
          <rect x="940" y="328" width="93" height="59" fill="#29423f" />
          <rect x="940" y="388" width="93" height="59" fill="#4d2434" />
          <line x1="940" x2="1033" y1="387.5" y2="387.5" stroke="#a7a7aa" />
          <Candles data={rightCandles} width={5} upColor="#26bfc0" downColor="#fff" upWick="#23979a" downWick="#b8b8bb" />
          <line x1="720" x2="1167" y1="385.5" y2="385.5" stroke="#3fa8b8" strokeDasharray="2 1" />
          {rightPrices.map(([price, y]) => (
            <text key={price} x="1183" y={y + 2} textAnchor="middle" fontSize="6" fill="#c4c4c8">{price}</text>
          ))}
          <rect x="1167" y="381" width="32" height="9" rx="1" fill="#28d3d0" />
          <text x="1183" y="388" textAnchor="middle" fontSize="6" fill="#1b3436">24745.00</text>
          {rightTimes.map(([time, x]) => (
            <text key={x} x={x} y="564" textAnchor="middle" fontSize="6" fill="#c4c4c8">{time}</text>
          ))}
          <circle cx="1184" cy="563" r="3.5" fill="none" stroke="#bcbcc0" />
          <circle cx="1184" cy="563" r="1" fill="#bcbcc0" />
        </g>
      </svg>
      <div className="relative flex gap-[2px] pt-[5px] pl-[7px] text-[7px] leading-[11px] text-[#27b5b8]">
        <span className="mr-[23px] text-[#e0e0e0]">MNQZ25 · 15</span>
        <span><span className="text-[#ddd]">O</span>24726.25</span>
        <span><span className="text-[#ddd]">H</span>24763.25</span>
        <span><span className="text-[#ddd]">L</span>24725.00</span>
        <span><span className="text-[#ddd]">C</span>24745.00</span>
        <span>+19.00 (+0.08%)</span>
      </div>
      <button type="button" className="relative ml-[9px] flex items-center gap-[2px] text-[7px] leading-[13px] text-[#ccc]"><ChevronDown size={6} /> 1</button>
      <div className="absolute top-[5px] right-[41px] rounded-[2px] bg-[#18181b] px-[3px] py-px text-center text-[5px] leading-[8px] font-bold text-[#e8e8e8]">
        Position Bracket<br />Enabled
      </div>
      <div className="absolute bottom-[21px] left-2 flex size-4 items-center justify-center rounded-full bg-[#111114] text-white">
        <TvMark className="w-[11px]" />
      </div>
      <div className="absolute bottom-[12px] left-[150px] flex h-5 items-center rounded-[2px] bg-[#252429] pl-1 text-[#cfcfcf]">
        <span className="w-[9px] text-[7px] text-[#555]">⠿</span>
        {['trend', 'ray', 'channel', 'position', 'arrow', 'wave', 'rect', 'measure', 'fib'].map((name) => (
          <IconButton key={name} label={name} className="w-[19px]"><Glyph name={name} /></IconButton>
        ))}
      </div>
    </div>
  )
}

function TopstepToolbar() {
  const frame = 'text-[7px] font-semibold'
  return (
    <div className="flex h-[18px] shrink-0 items-center text-[#d6d6d6] [font-family:'Open_Sans','Noto_Sans',sans-serif]">
      <button type="button" className={clsx(frame, 'ml-1 flex w-12 shrink-0 items-center gap-[2px]')}><Search size={9} />/MNQ</button>
      <IconButton label="Compare" className="w-4"><CirclePlus size={11} /></IconButton>
      <Divider className="w-2 text-[#aaa]" />
      <button type="button" className={clsx(frame, 'w-4')}>5m</button>
      <button type="button" className={clsx(frame, 'w-5 text-[#d98a2b]')}>15m</button>
      <button type="button" className={clsx(frame, 'w-[18px]')}>30m</button>
      <button type="button" className={clsx(frame, 'w-[14px]')}>1h</button>
      <button type="button" className={clsx(frame, 'w-[13px]')}>4h</button>
      <IconButton label="More intervals" className="w-3"><ChevronDown size={7} /></IconButton>
      <Divider className="w-1 text-[#aaa]" />
      <IconButton label="Bars" className="w-[17px]"><Glyph name="bars" size={10} /></IconButton>
      <IconButton label="Candles" className="w-[14px] text-[#d98a2b]"><Glyph name="candles" size={10} /></IconButton>
      <IconButton label="Chart types" className="w-3"><ChevronDown size={7} /></IconButton>
      <Divider className="w-1 text-[#aaa]" />
      <IconButton label="Indicators" className="w-5"><Glyph name="fx" size={11} /></IconButton>
      <IconButton label="Templates" className="w-[18px]"><LayoutGrid size={10} /></IconButton>
      <Divider className="w-[6px] text-[#aaa]" />
      <button type="button" className={clsx(frame, 'flex w-[50px] items-center justify-center gap-[2px]')}><FaCog size={5} />Preferences</button>
      <Divider className="w-1 text-[#aaa]" />
      <button type="button" className={clsx(frame, 'flex w-[64px] items-center justify-center gap-[3px] whitespace-nowrap')}><Link2 size={8} className="-rotate-45" />Add Chart Link</button>
      <Divider className="w-1 text-[#aaa]" />
      <IconButton label="Undo" className="w-5"><Undo2 size={9} /></IconButton>
      <IconButton label="Redo" className="w-[18px] text-[#555]"><Redo2 size={9} /></IconButton>
      <div className="ml-auto flex items-center">
        <IconButton label="Layout" className="w-3"><Square size={12} /></IconButton>
        <button type="button" className={clsx(frame, 'w-[38px]')}>default</button>
        <IconButton label="Layouts" className="w-[10px]"><ChevronDown size={7} /></IconButton>
        <Divider className="w-[6px] text-[#aaa]" />
        <IconButton label="Quick search" className="w-[18px]"><Glyph name="quickSearch" size={11} /></IconButton>
      </div>
    </div>
  )
}

function TopstepHeader() {
  const pill = 'flex h-[17px] shrink-0 items-center justify-center rounded-[2px] bg-[#1f2126] px-[5px]'
  return (
    <header className="flex h-[22px] shrink-0 items-center gap-[3px] bg-[#16181b] text-[6px] font-bold text-white">
      <div className="flex h-[17px] w-[87px] shrink-0 items-center rounded-[2px] border border-[#3a3d42]">
        <select aria-label="Trading account" className="min-w-0 flex-1 appearance-none bg-transparent pl-[6px] text-[#2a8cd0] outline-none">
          <option>$150K PRACTICE | ******</option>
        </select>
        <Caret />
      </div>
      <span className={pill}>BAL: ******</span>
      <span className={pill}>MLL: ******</span>
      <span className="flex h-[17px] w-[47px] shrink-0 items-center justify-center rounded-[2px] bg-[#3fa548]">RP&amp;L: $497.86</span>
      <span className={pill}>UP&amp;L: $0.00</span>
      <IconButton label="Session clock" className="h-[17px] w-[14px] rounded-[2px] bg-[#2a2c31]"><Info size={9} /></IconButton>
      <span className="ml-auto text-[5px] font-normal text-[#8f9194]">Rebout Rate: Medium</span>
      <Wifi size={7} className="text-[#3fae55]" />
      <ChartColumnIncreasing size={7} strokeWidth={4} className="text-[#3fae55]" />
      <div className="ml-[2px] flex h-[14px] w-[75px] shrink-0 items-center border border-[#cfcfcf]">
        <select aria-label="Layout" className="min-w-0 flex-1 appearance-none bg-transparent pl-1 text-[5px] outline-none"><option>LAYOUT | default (draft)</option></select>
        <ChevronDown size={6} strokeWidth={4} className="mr-[2px]" />
      </div>
      <div className="flex shrink-0">
        <IconButton label="Save layout" className="w-[9px]"><Save size={7} /></IconButton>
        <IconButton label="Add" className="w-4"><Plus size={7} /></IconButton>
        <IconButton label="Reset" className="w-[13px]"><RotateCcw size={7} /></IconButton>
        <IconButton label="Duplicate" className="w-[14px]"><SquareStack size={7} /></IconButton>
        <IconButton label="Full screen" className="-mr-[2px] w-[10px]"><Maximize size={7} /></IconButton>
      </div>
    </header>
  )
}

function PositionsPanel() {
  const tabs = ['Orders', 'Trades', 'Quotes', 'The Tilt™']
  return (
    <div className="flex h-[29px] shrink-0 flex-col bg-[#29282d]">
      <div className="flex h-[17px] items-stretch border-b border-[#47464c] pr-[9px] pl-[5px] text-[7px] leading-[14px] text-[#57565b]">
        <button type="button" className="w-[39px] pt-[2px] text-left">Accounts <span className="text-[5px]">x</span></button>
        <button type="button" className="w-9 border-b border-white pt-[2px] text-left font-semibold text-white">Positions <span className="text-[5px] text-[#57565b]">x</span></button>
        <div className="ml-[6px] flex gap-[7px]">
          {tabs.map((tab) => <button type="button" key={tab} className="pt-[2px]">{tab} <span className="text-[5px]">x</span></button>)}
        </div>
        <span className="ml-auto flex items-center"><PanelActions /></span>
      </div>
      <table className="w-full table-fixed text-[6px] leading-[12px] text-[#f0f0f0]">
        <thead>
          <tr>
            <th className="w-[8%] pl-[6px] text-left">Time</th><th className="w-[18%]">Symbol</th><th className="w-[5%]">Position</th>
            <th className="w-[12%]">Entry Price</th><th className="w-[15%]">Risk</th><th className="w-[15%]">To Make</th>
            <th className="w-[12%]">P&amp;L</th><th className="w-[15%]">Close</th>
          </tr>
        </thead>
      </table>
    </div>
  )
}

function RightWindow() {
  return (
    <section className="flex min-w-0 flex-col overflow-hidden border-b-2 border-l-4 border-[#333233] bg-[#1b1b1e] [font-family:Roboto,'Liberation_Sans',sans-serif]">
      <div className="[font-family:'Open_Sans','Noto_Sans',sans-serif]">
        <div className="flex h-[21px] items-center bg-[#2a2a2a] text-[6px] whitespace-nowrap text-[#d2d2d2]">
          <IconButton label="Workspaces" className="w-[9px]"><PanelTop size={9} /></IconButton>
          <button type="button" className="ml-[11px] h-[11px] w-9 shrink-0 rounded-[2px] bg-[#6a9bf4] leading-[11px] text-[#15336d]">Dashboard</button>
          <div className="ml-1 flex h-full w-[120px] shrink-0 items-center rounded-t-[4px] bg-[#373737]">
            <span className="ml-[3px] flex h-[9px] w-[7px] items-center justify-center bg-black font-bold text-white">I</span>
            <button type="button" className="ml-[5px]">MNQZ25 $24,744.00 ▼ -1.40%</button>
            <IconButton label="Close tab" className="mr-1 ml-auto"><X size={7} /></IconButton>
          </div>
          <span className="ml-[2px] w-2 text-center font-bold text-[#8a5134]">M</span>
          <button type="button" className="ml-1 w-[92px] text-left">Inbox (35,432) - luinbruis44@gm</button>
          <IconButton label="Close tab" className="ml-[3px]"><X size={7} /></IconButton>
          <span className="ml-1 h-[10px] w-px bg-[#555]" />
          <IconButton label="New tab" className="ml-1"><Plus size={9} /></IconButton>
          <WindowButtons className="-mr-[8px]" />
        </div>
        <div className="-mr-[5px]"><AddressBar url="https://topstepx.com/trade" textSize="text-[8px]" /></div>
      </div>
      <div className="flex min-h-0 flex-1">
        <nav className="mr-[3px] flex w-[27px] shrink-0 flex-col items-center bg-[#2a2a2d] pr-[3px] text-[#5f5f63]">
          <span className="mt-[4px] text-[5px] leading-[9px] font-black text-white">TOPSTEP</span>
          <span className="mt-px flex size-5 shrink-0 items-center justify-center bg-white text-[16px] leading-5 font-black text-[#222]">X</span>
          <IconButton label="Trade" className="mt-[10px] h-[18px] text-white">
            <svg width="17" height="14" viewBox="0 0 17 14" fill="none" stroke="currentColor">
              <path d="M2.5 2v2M2.5 10v3M6.5 3v3M6.5 11v3M10.5 0v3M10.5 9v3M14.5 0v2M14.5 8v4" />
              <rect x="1.5" y="4.5" width="2" height="6" rx="1" /><rect x="5.5" y="6.5" width="2" height="5" rx="1" />
              <rect x="9.5" y="3.5" width="2" height="6" rx="1" /><rect x="13.5" y="2.5" width="2" height="6" rx="1" />
            </svg>
          </IconButton>
          <IconButton label="Community" className="mt-1 h-5"><Glyph name="community" size={18} /></IconButton>
          <IconButton label="Signals" className="mt-[2px] h-5"><Glyph name="signals" size={15} /></IconButton>
          <IconButton label="Settings" className="mt-1 h-6"><Settings size={16} strokeWidth={1.5} /></IconButton>
          <button type="button" className="mt-[5px] w-[18px] overflow-hidden rounded-[3px] border border-[#d32020] bg-[#b7f51c] text-[8px] leading-[12px] font-black text-black">
            TV<span className="block bg-[#d32020] text-[5px] leading-[6px]">LIVE</span>
          </button>
          <button type="button" className="mt-[6px] h-[13px] w-[13px] rounded-[2px] bg-[#5a5a5e] text-[10px] leading-[13px] font-bold text-[#29282d]">?</button>
          <IconButton label="Log out" className="mt-auto mb-[3px] text-[#dadada]"><LogIn size={15} /></IconButton>
        </nav>
        <div className="flex min-w-0 flex-1 flex-col">
          <TopstepHeader />
          <div className="mt-[2px] flex min-h-0 flex-1 gap-1">
            <div className="flex min-w-0 flex-1 flex-col bg-[#29282d]">
              <div className="flex h-4 shrink-0 items-center pr-[14px] pl-[5px] text-[7px] font-semibold text-white">
                <span className="flex h-[15px] w-6 items-center border-b border-white">Chart</span>
                <PanelActions />
              </div>
              <TopstepToolbar />
              <div className="flex min-h-0 flex-1">
                <aside className="flex w-[27px] shrink-0 flex-col items-center pt-[5px] text-[#c4c4c6]">
                  <ToolColumn tools={rightTools} cell="h-[18px] w-[18px]" line="h-px w-[18px] bg-[#b8b8b8]" />
                  <IconButton label="Favorites toolbar" className="mt-auto size-4 rounded-[2px] bg-[#e09f1f] text-[#4a3508]"><Star size={10} /></IconButton>
                  <IconButton label="Object tree" className="mt-[5px] mb-3"><Layers size={11} /></IconButton>
                </aside>
                <div className="flex min-w-0 flex-1 flex-col">
                  <RightChart />
                  <div className="flex h-5 shrink-0 items-center pl-[9px] text-[7px] font-semibold text-[#d6d6d6]">
                    <div className="flex gap-[6px]">
                      {['1yr', '3m', '1m', '5d', '3d', '1d'].map((range) => <button type="button" key={range}>{range}</button>)}
                    </div>
                    <Divider className="w-2 text-[#aaa]" />
                    <IconButton label="Go to date" className="w-[14px]"><CalendarSync size={10} /></IconButton>
                    <span className="ml-auto">09:26:32 (UTC-5)</span>
                    <button type="button" className="ml-[6px]">ETH</button>
                    <Divider className="w-[10px] text-[#aaa]" />
                    <button type="button">%</button>
                    <button type="button" className="ml-2">log</button>
                    <button type="button" className="mr-[6px] ml-[6px]">auto</button>
                  </div>
                </div>
              </div>
            </div>
            <div className="flex w-[74px] shrink-0 flex-col gap-[2px]">
              <OrderPanel />
              <SalesPanel />
            </div>
          </div>
          <div className="mt-[2px]"><PositionsPanel /></div>
          <footer className="relative flex h-[11px] shrink-0 items-center text-[5px] text-[#a6a6a8]">
            <span>Version: 1.22.24</span>
            <span className="mx-auto pr-9">Licensed to Topstep & powered by ProjectX. Copyright 2024-2025</span>
          </footer>
        </div>
      </div>
    </section>
  )
}

function Taskbar() {
  return (
    <footer className="flex h-[21px] shrink-0 items-center overflow-hidden bg-[#101010] text-[#ededed]">
      <IconButton label="Start" className="w-6"><FaWindows size={9} /></IconButton>
      <label className="flex h-full w-[146px] shrink-0 items-center gap-[6px] bg-[#3a3a3a] pl-[6px]">
        <Search size={9} className="-scale-x-100" />
        <input aria-label="Search" placeholder="Type here to search" className="min-w-0 flex-1 bg-transparent text-[7px] outline-none placeholder:text-[#e0e0e0]" />
        <svg width="32" height="14" viewBox="0 0 32 14" className="mr-1">
          <path d="M13 1l2 4 4 2-4 2-2 4-2-4-4-2 4-2z" fill="#f6c83c" />
          <path d="M24 5l1 3 3 1-3 1-1 3-1-3-3-1 3-1z" fill="#f0d070" />
          <circle cx="2.5" cy="11" r="2" fill="#3e8fd8" /><circle cx="22" cy="3" r="1" fill="#f0b040" /><circle cx="30" cy="12" r="1" fill="#c9b060" />
        </svg>
      </label>
      <IconButton label="Task view" className="h-full w-[25px]"><Glyph name="taskView" size={11} /></IconButton>
      <IconButton label="Copilot" className="h-full w-6 bg-[#a4571f]"><CopilotMark className="size-3" /></IconButton>
      <IconButton label="Edge" className="h-full w-[25px] border-b-[2px] border-[#76c5d8] bg-[#363636]">
        <svg width="14" height="14" viewBox="0 0 20 20">
          <circle cx="10" cy="10" r="9" fill="#1b86d6" />
          <path d="M1.5 8C3 2 8 1 11 1c5 0 8 4 8 7 0 3-3 4-6 4-2 0-1-1-1-3 0-3-3-4-6-3-2 .5-4 1-4.5 2z" fill="#4fcf8c" />
          <path d="M7 8c-2 3 0 8 6 9 2 0 4-1 5-2-2 4-9 6-13 2-3-4-2-9 2-9z" fill="#15559e" />
        </svg>
      </IconButton>
      <IconButton label="Files" className="ml-px w-6">
        <svg width="12" height="10" viewBox="0 0 12 10"><path d="M0 1h5l1 1h6v8H0z" fill="#e9b83b" /><path d="M0 4h12v6H0z" fill="#f7dd80" /><path d="M3 6h6v4H3z" fill="#3d8fd6" /></svg>
      </IconButton>
      <IconButton label="Store" className="w-[25px]">
        <svg width="13" height="13" viewBox="0 0 13 13"><path d="M4 3V1h5v2" fill="none" stroke="#eee" /><rect y="2.5" width="13" height="10" rx="1.5" fill="#eee" /><path d="M4 5h2v2H4z" fill="#e0502c" /><path d="M7 5h2v2H7z" fill="#6fae2c" /><path d="M4 8h2v2H4z" fill="#2c8fe0" /><path d="M7 8h2v2H7z" fill="#e8b32c" /></svg>
      </IconButton>
      <IconButton label="Outlook" className="w-[25px]">
        <svg width="13" height="12" viewBox="0 0 13 12"><path d="M3 4l5-4 5 4v8H3z" fill="#2b9be0" /><path d="M3 12l10-7v7z" fill="#6cc6f5" /><rect y="4" width="7" height="7" rx="1" fill="#0f5fb8" /><circle cx="3.5" cy="7.5" r="1.8" fill="none" stroke="#fff" /></svg>
      </IconButton>
      <IconButton label="Discord" className="relative h-full w-6 border-b-[2px] border-[#76c5d8]">
        <span className="flex size-3 items-center justify-center rounded-full bg-[#5865f2]"><FaDiscord size={8} /></span>
        <span className="absolute right-[4px] bottom-[2px] size-[6px] rounded-full bg-[#d8303c]" />
      </IconButton>
      <IconButton label="Recorder" className="relative ml-[3px] h-full w-5 border-b-[2px] border-[#76c5d8]">
        <span className="size-3 rounded-full border border-[#ccc] bg-[#222]" />
        <span className="absolute right-[3px] bottom-[2px] size-[7px] rounded-full bg-[#e01c1c]" />
      </IconButton>
      <div className="ml-auto flex items-center text-[7px]">
        <svg width="12" height="12" viewBox="0 0 12 12"><circle cx="6" cy="6" r="5.5" fill="#f29a1f" /><circle cx="8" cy="4" r="3.5" fill="#d8401f" /><circle cx="4.5" cy="7" r="3.5" fill="#f7a823" /></svg>
        <span className="ml-1">68°F&nbsp; Sunny</span>
        <IconButton label="Hidden icons" className="ml-[9px] w-3"><ChevronUp size={8} /></IconButton>
        <IconButton label="Devices" className="w-3"><MonitorSmartphone size={8} /></IconButton>
        <IconButton label="Microphone" className="w-3"><Mic size={9} fill="currentColor" /></IconButton>
        <IconButton label="Display" className="relative w-3"><PanelTop size={9} /><span className="absolute right-px bottom-0 size-[3px] rounded-full bg-[#e88a2c]" /></IconButton>
        <IconButton label="Network" className="w-3"><Wifi size={8} className="rotate-45" /></IconButton>
        <IconButton label="Volume" className="w-3"><Volume2 size={9} /></IconButton>
        <span className="w-[34px] text-center text-[6px] leading-[9px]">9:26 AM<br />11/14/2025</span>
        <IconButton label="Notifications" className="-mr-1 ml-1 w-[13px]"><MessageSquare size={10} fill="currentColor" /></IconButton>
      </div>
    </footer>
  )
}

export default function App() {
  return (
    <main className="flex h-screen flex-col overflow-hidden bg-black pt-[109px] pb-[65px] [font-family:'Open_Sans','Noto_Sans',sans-serif] [&_svg]:shrink-0">
      <div className="grid min-h-0 flex-1 grid-cols-[5px_654fr_621fr] bg-[linear-gradient(to_right,#6d8f8c,#7e9a96_12%,#b9814f_28%,#b98150_50%,#333_52%)]">
        <div className="bg-[linear-gradient(to_bottom,#8d8792,#a39a9c_20%,#17140e_24%,#1d1a12_44%,#7a6c60_52%,#3c4a35_66%,#a8b5a6_74%,#6d8f8c)]" />
        <LeftWindow />
        <RightWindow />
      </div>
      <Taskbar />
    </main>
  )
}
